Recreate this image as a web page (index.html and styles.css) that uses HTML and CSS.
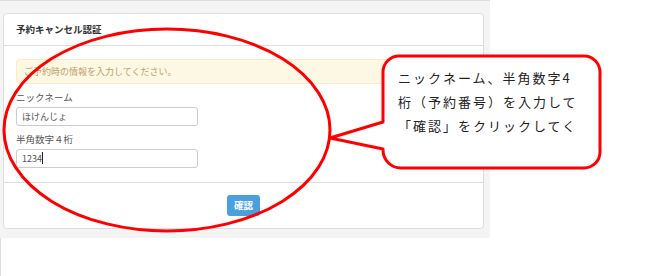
FILE: index.html
```html
<!DOCTYPE html>
<html lang="ja">
<head>
    <meta charset="UTF-8">
    <title>予約キャンセル認証</title>
    <link rel="stylesheet" href="styles.css">
</head>
<body>
    <div class="screen">
        <div class="panel">
            <div class="panel-heading">予約キャンセル認証</div>
            <div class="panel-body">
                <div class="alert">ご予約時の情報を入力してください。</div>
                <label class="field-label">ニックネーム</label>
                <div class="input">ほけんじょ</div>
                <label class="field-label">半角数字４桁</label>
                <div class="input">1234<span class="caret"></span></div>
            </div>
            <div class="panel-footer">
                <span class="btn">確認</span>
            </div>
        </div>
    </div>
    <div class="rest"></div>

    <!-- 注釈（赤い丸と吹き出し） -->
    <svg class="marks" width="649" height="276" viewBox="0 0 649 276">
        <ellipse cx="167" cy="130" rx="163" ry="101" fill="none" stroke="#f00" stroke-width="3"/>
        <path d="M 399 56 H 584 A 16 16 0 0 1 600 72 V 152 A 16 16 0 0 1 584 168 H 401 A 18 18 0 0 1 383 150 V 149 L 330 138 L 383 122 V 72 A 16 16 0 0 1 399 56 Z" fill="#fff" stroke="#f00" stroke-width="3" stroke-linejoin="round"/>
    </svg>
    <div class="bubble-text">ニックネーム、半角数字4桁（予約番号）を入力して「確認」をクリックしてく</div>
</body>
</html>
```

FILE: styles.css
```css
body {
    margin: 0;
    background: #fff;
    font-family: "Noto Sans CJK JP", "Noto Sans", sans-serif;
    color: #333;
    width: 649px;
    height: 276px;
    overflow: hidden;
    position: relative;
}
.screen {
    width: 490px;
    height: 238px;
    box-sizing: border-box;
    background: #f4f4f4;
    border-top: 1px solid #ddd;
    padding: 12px 0 0 3px;
}
.rest {
    height: 38px;
    border-left: 1px solid #ddd;
}
.panel {
    width: 481px;
    box-sizing: border-box;
    background: #fff;
    border: 1px solid #ddd;
    border-radius: 4px;
}
.panel-heading {
    height: 31px;
    line-height: 31px;
    padding: 0 12px;
    font-size: 9.5px;
    font-weight: bold;
    color: #333;
    border-bottom: 1px solid #ddd;
}
.panel-body {
    padding: 13px 12px 14px 12px;
}
.alert {
    height: 25px;
    box-sizing: border-box;
    line-height: 23px;
    padding: 0 7px;
    font-size: 9px;
    color: #bf9f6c;
    background: #fcf8e3;
    border: 1px solid #faebcc;
    border-radius: 3px;
    margin-bottom: 7px;
}
.field-label {
    display: block;
    height: 12px;
    line-height: 12px;
    font-size: 9.5px;
    color: #555;
    margin-bottom: 4px;
}
.input {
    width: 182px;
    height: 19px;
    box-sizing: border-box;
    border: 1px solid #ccc;
    border-radius: 3px;
    padding: 0 5px;
    line-height: 17px;
    font-size: 9px;
    color: #555;
    margin-bottom: 7px;
}
.input:last-child {
    margin-bottom: 0;
}
.caret {
    display: inline-block;
    width: 1px;
    height: 12px;
    background: #222;
    vertical-align: -2px;
}
.panel-footer {
    border-top: 1px solid #ddd;
    padding: 12px 0;
    display: flex;
    justify-content: center;
}
.btn {
    width: 33px;
    height: 21px;
    line-height: 21px;
    text-align: center;
    background: #4a9fe0;
    color: #fff;
    border-radius: 3px;
    font-size: 9.5px;
    font-weight: bold;
}
.marks {
    position: absolute;
    top: 0;
    left: 0;
}
.bubble-text {
    position: absolute;
    left: 398px;
    top: 66px;
    width: 183px;
    font-size: 13px;
    line-height: 24px;
    letter-spacing: 2px;
    color: #222;
}
```
